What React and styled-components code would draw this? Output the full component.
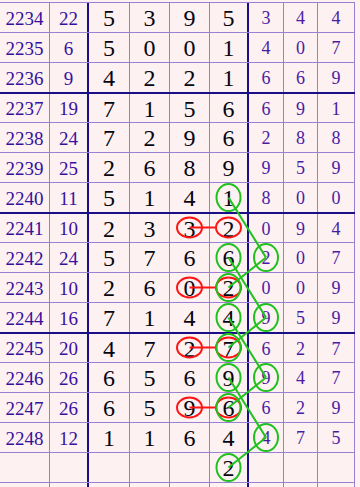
import React from 'react'
import styled, { createGlobalStyle } from 'styled-components'

const LINE = '#9b80d2'
const THICK = '#1a0f86'
const BG = '#fdf1f1'
const GREEN = '#1fc11f'
const RED = '#ff1414'

const WIDTHS = [50, 39, 41, 40, 40, 39, 35, 34, 37]
const BOLD_COLS = [1, 5]
const ROW_H = 30

const rows = [
  ['2234', '22', '5395', '344'],
  ['2235', '6', '5001', '407'],
  ['2236', '9', '4221', '669'],
  ['2237', '19', '7156', '691'],
  ['2238', '24', '7296', '288'],
  ['2239', '25', '2689', '959'],
  ['2240', '11', '5141', '800'],
  ['2241', '10', '2332', '094'],
  ['2242', '24', '5766', '207'],
  ['2243', '10', '2602', '009'],
  ['2244', '16', '7144', '959'],
  ['2245', '20', '4727', '627'],
  ['2246', '26', '6569', '947'],
  ['2247', '26', '6596', '629'],
  ['2248', '12', '1164', '475'],
  ['', '', '   2', '   '],
  ['', '', '    ', '   '],
]

// rows that start a new block of four get the heavy rule on top
const groupStart = [3, 7, 11]

const greenMarks = [
  [6, 5], [8, 5], [8, 6], [9, 5], [10, 5], [10, 6],
  [11, 5], [12, 5], [12, 6], [13, 5], [14, 6], [15, 5],
]
const greenLinks = [
  [[6, 5], [8, 6]], [[8, 6], [9, 5]],
  [[8, 5], [10, 6]], [[10, 6], [11, 5]],
  [[10, 5], [12, 6]], [[12, 6], [13, 5]],
  [[12, 5], [14, 6]], [[14, 6], [15, 5]],
]
const redRows = [7, 9, 11, 13]

const colStart = WIDTHS.map((w, i) => WIDTHS.slice(0, i).reduce((a, b) => a + b, 0))
const cx = (c) => colStart[c] + (WIDTHS[c] - (BOLD_COLS.includes(c) ? 2 : 1)) / 2
const cy = (r) => r * ROW_H + 15.5

const GlobalStyle = createGlobalStyle`
  html, body {
    margin: 0;
    padding: 0;
    background: ${BG};
    overflow: hidden;
  }
`

const Page = styled.div`
  padding-top: 2px;
  width: 360px;
  height: 487px;
  background: ${BG};
  overflow: hidden;
  font-family: "Liberation Serif", "Times New Roman", serif;
`

const Table = styled.div`
  position: relative;
  width: ${WIDTHS.reduce((a, b) => a + b, 0)}px;
`

const Row = styled.div`
  display: grid;
  grid-template-columns: ${WIDTHS.map((w) => w + 'px').join(' ')};
  height: ${ROW_H}px;
  box-sizing: border-box;
  border-top: ${(p) => (p.$thick ? `2px solid ${THICK}` : `1px solid ${LINE}`)};
`

const Cell = styled.div`
  display: flex;
  align-items: center;
  justify-content: center;
  border-right: ${(p) => (p.$bold ? `2px solid ${THICK}` : `1px solid ${LINE}`)};
  line-height: 1;
  padding-top: 1px;
`

const Issue = styled(Cell)`
  font-size: 19px;
  color: #35109e;
`

const Sum = styled(Cell)`
  font-size: 19px;
  color: #3a10a2;
`

const Big = styled(Cell)`
  font-size: 24px;
  color: #050510;
`

const Small = styled(Cell)`
  font-size: 18px;
  color: #4a1ca6;
`

const Overlay = styled.svg`
  position: absolute;
  left: 0;
  top: 0;
  pointer-events: none;
`

function Marks() {
  return (
    <Overlay width="360" height="520">
      {redRows.map((r) => (
        <g key={'r' + r} stroke={RED} strokeWidth="2" fill="none">
          <line x1={cx(4)} y1={cy(r)} x2={cx(5) - 13} y2={cy(r)} />
          <ellipse cx={cx(4)} cy={cy(r)} rx="12.5" ry="10" />
          <ellipse cx={cx(5)} cy={cy(r)} rx="12.5" ry="10" />
        </g>
      ))}
      {greenLinks.map(([a, b], i) => (
        <line
          key={'l' + i}
          x1={cx(a[1])}
          y1={cy(a[0])}
          x2={cx(b[1])}
          y2={cy(b[0])}
          stroke={GREEN}
          strokeWidth="2"
        />
      ))}
      {greenMarks.map(([r, c]) => (
        <ellipse
          key={'g' + r + c}
          cx={cx(c)}
          cy={cy(r)}
          rx="12"
          ry="13.5"
          stroke={GREEN}
          strokeWidth="2"
          fill="none"
        />
      ))}
    </Overlay>
  )
}

export default function App() {
  return (
    <Page>
      <GlobalStyle />
      <Table>
        {rows.map(([issue, sum, big, small], r) => (
          <Row key={r} $thick={groupStart.includes(r)}>
            <Issue>{issue}</Issue>
            <Sum $bold>{sum}</Sum>
            {big.split('').map((d, i) => (
              <Big key={i} $bold={i === 3}>{d.trim()}</Big>
            ))}
            {small.split('').map((d, i) => (
              <Small key={i}>{d.trim()}</Small>
            ))}
          </Row>
        ))}
        <Marks />
      </Table>
    </Page>
  )
}
